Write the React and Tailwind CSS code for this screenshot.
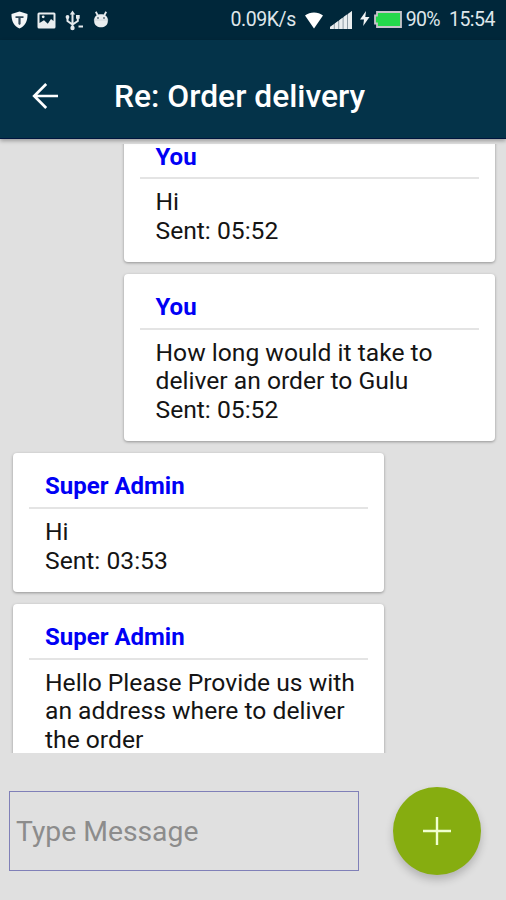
import React, { useState } from 'react'

const messages = [
    { id: 1, sender: 'You', mine: true, lines: ['Hi'], time: '05:52' },
    { id: 2, sender: 'You', mine: true, lines: ['How long would it take to', 'deliver an order to Gulu'], time: '05:52' },
    { id: 3, sender: 'Super Admin', mine: false, lines: ['Hi'], time: '03:53' },
    { id: 4, sender: 'Super Admin', mine: false, lines: ['Hello Please Provide us with', 'an address where to deliver', 'the order'] }
];

function StatusBar() {
    return (
        <div className='flex h-10 shrink-0 items-center bg-[#00273a] pl-[11px] pr-3 text-[#dfe6ea]'>
            <svg width='17' height='18' viewBox='0 0 17 18'>
                <path d='M8.5 0.5 L16.5 3 C16.8 10 14 15 8.5 17.5 C3 15 0.2 10 0.5 3 Z' fill='#f4f6f7' />
                <path d='M4.5 5.2 H12.5 V7 H9.6 V13 L8.5 14 L7.4 13 V7 H4.5 Z' fill='#31495a' />
            </svg>
            <svg className='ml-[9px]' width='19' height='17' viewBox='0 0 19 17'>
                <rect x='0.5' y='0.5' width='18' height='16' rx='1.5' fill='#e9edef' />
                <path d='M2.5 2.5 H16.5 V9 L14 7 L10.8 11.8 L7 8.2 L2.5 11 Z' fill='#00273a' />
                <circle cx='6.2' cy='4.8' r='1.4' fill='#e9edef' />
            </svg>
            <svg className='ml-[9px]' width='19' height='21' viewBox='0 0 19 21' fill='none' stroke='#e4e9ec' strokeWidth='2'>
                <path d='M7.5 3 V17 M2.5 7 V11 L7.5 14.5 L12.8 11 V6.5' />
                <path d='M7.5 0.5 L10.2 4.4 H4.8 Z' fill='#e4e9ec' stroke='none' />
                <circle cx='7.5' cy='18' r='2.2' fill='#e4e9ec' stroke='none' />
                <circle cx='2.5' cy='7' r='1.9' fill='#e4e9ec' stroke='none' />
                <rect x='11' y='5' width='3.7' height='3.7' fill='#e4e9ec' stroke='none' />
                <path d='M13.5 16.5 H18' strokeWidth='2' />
            </svg>
            <svg className='mb-[2px] ml-[9px]' width='16' height='17' viewBox='0 0 16 17'>
                <path d='M2.8 0.8 L4.8 4.5 M13.2 0.8 L11.2 4.5' stroke='#e4e9ec' strokeWidth='1.8' />
                <path d='M1.2 8.5 C1.5 1.5 14.5 1.5 14.8 8.5 V10.5 C14.8 18.2 1.2 18.2 1.2 10.5 Z' fill='#e9edef' />
                <path d='M0.8 9 H15.2' stroke='#c8d0d6' strokeWidth='0.8' />
                <circle cx='5' cy='7' r='1' fill='#5d6f7b' />
                <circle cx='11' cy='7' r='1' fill='#5d6f7b' />
            </svg>
            <span className='ml-auto text-[19.5px] leading-10 tracking-[-0.45px]'>0.09K/s</span>
            <svg className='ml-[9px]' width='18' height='17' viewBox='0 0 18 17'>
                <path d='M0 3.5 C5 -0.5 13 -0.5 18 3.5 L9 16.5 Z' fill='#fff' />
            </svg>
            <svg className='ml-[7px]' width='22' height='18' viewBox='0 0 22 18' fill='#e9edef'>
                <path d='M0 18 V16 L22 0 V18 Z' fill='#8d9ba4' />
                <path d='M0 18 V16 L3.8 13.2 V18 Z' />
                <path d='M4.8 18 V12.5 L8.2 10 V18 Z' />
                <path d='M9.2 18 V9.3 L12.6 6.8 V18 Z' />
                <path d='M13.6 18 V6.1 L17 3.6 V18 Z' />
                <path d='M18 18 V2.9 L22 0 V18 Z' />
            </svg>
            <svg className='mb-[3px] ml-2' width='10' height='15' viewBox='0 0 10 15'>
                <path d='M6 0 L0 8.5 H4 L3.2 15 L9.5 6 H5.3 Z' fill='#f1f3f4' />
            </svg>
            <svg className='mb-[2px] ml-[4px]' width='28' height='17' viewBox='0 0 28 17'>
                <path d='M3 1 H27 V16 H3 V12.5 H1 V4.5 H3 Z' fill='#25d84c' stroke='#c9c3cc' strokeWidth='1.8' />
            </svg>
            <span className='ml-[4px] text-[19.5px] leading-10 tracking-[-0.7px]'>90%</span>
            <span className='-mr-px ml-[9px] text-[19.5px] leading-10 tracking-[-0.5px]'>15:54</span>
        </div>
    )
}

function Header() {
    return (
        <header className='relative z-10 flex h-[99px] shrink-0 items-center border-b border-[#00153d] bg-[#043349] pt-[14px] text-white shadow-[0_2px_4px_rgba(0,0,0,0.3)]'>
            <button className='ml-8 pb-px' aria-label='Back'>
                <svg width='27' height='26' viewBox='0 0 27 26' fill='none' stroke='white' strokeWidth='2.7'>
                    <path d='M14.2 1 L2.2 13 L14.2 25 M2.5 13 H26' />
                </svg>
            </button>
            <h1 className='-mt-px ml-[55px] text-[31.8px] font-medium leading-9'>Re: Order delivery</h1>
        </header>
    )
}

function Message({ sender, mine, lines, time }) {
    return (
        <div className={`w-[371px] shrink-0 rounded-[4px] bg-white px-4 pb-[17px] shadow-[0_1px_3px_rgba(0,0,0,0.35)] ${mine ? 'self-end' : 'self-start'}`}>
            <div className='h-[56px] border-b-2 border-[#e4e4e4] px-4 pt-[19.5px] text-[24px] font-bold leading-[28px] text-[#0000f5]'>{sender}</div>
            <div className='px-4 pt-[9px] text-[24.65px] leading-[28.6px] text-[#141414]'>
                {lines.map((line) => (
                    <p key={line} className='whitespace-nowrap'>{line}</p>
                ))}
                {time && <p>Sent: {time}</p>}
            </div>
        </div>
    )
}

export default function App() {
    const [text, setText] = useState('');

    return (
        <main className="flex h-[900px] w-[506px] flex-col overflow-hidden bg-[#e0e0e0] font-['Roboto',sans-serif]">
            <StatusBar />
            <Header />

            {/* list is scrolled so the first card is cut at the top */}
            <div className='mt-[5px] h-[609px] shrink-0 overflow-hidden'>
                <div className='-mt-[21px] flex flex-col gap-[11.5px] pl-[13px] pr-[11.5px]'>
                    {messages.map((message) => (
                        <Message key={message.id} {...message} />
                    ))}
                </div>
            </div>

            <div className='mt-[34px] flex items-center pl-[9px]'>
                <input
                    type='text'
                    value={text}
                    onChange={(e) => setText(e.target.value)}
                    placeholder='Type Message'
                    className='h-20 w-[350px] border border-[#8080b8] bg-transparent pl-[6px] text-[28.3px] text-black outline-none placeholder:text-[#8c8c8c]'
                />
                <button className='ml-[34px] flex size-[88px] items-center justify-center rounded-full bg-[#86ad10] shadow-[0_5px_8px_rgba(0,0,0,0.2)]' aria-label='Send'>
                    <svg width='28' height='28' viewBox='0 0 28 28' stroke='#f0ffd0' strokeWidth='2.4'>
                        <path d='M14 0 V28 M0 14 H28' />
                    </svg>
                </button>
            </div>
        </main>
    )
}
